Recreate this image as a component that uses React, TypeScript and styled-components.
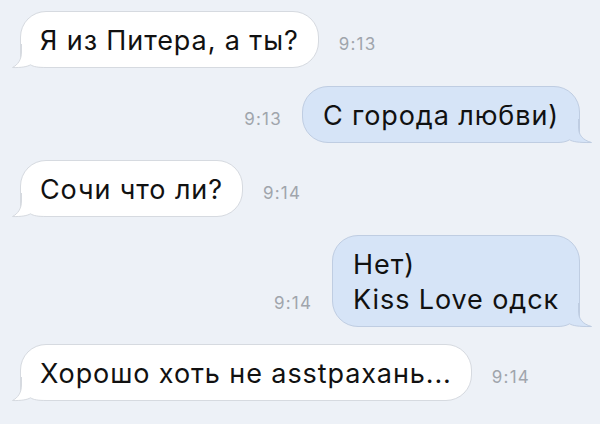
import React from "react";
import styled, { createGlobalStyle } from "styled-components";

const BG = "#edf1f7";

const Global = createGlobalStyle`
  html, body { margin: 0; padding: 0; background: ${BG}; }
  body { font-family: Inter, "Liberation Sans", Arial, sans-serif; }
`;

const Chat = styled.div`
  width: 600px;
  height: 424px;
  box-sizing: border-box;
  padding: 11px 20px 0 20px;
  display: flex;
  flex-direction: column;
  gap: 17.5px;
  background: ${BG};
  overflow: hidden;
`;

const Row = styled.div<{ $out?: boolean }>`
  display: flex;
  flex-direction: ${(p) => (p.$out ? "row-reverse" : "row")};
  justify-content: flex-start;
  align-items: last baseline;
  gap: 20px;
`;

const Bubble = styled.div<{ $out?: boolean }>`
  position: relative;
  box-sizing: border-box;
  padding: 11px ${(p) => (p.$out ? "20px" : "19px")} 9px;
  font-size: 27px;
  line-height: 35px;
  letter-spacing: 0.9px;
  color: #111;
  background: ${(p) => (p.$out ? "#d6e4f7" : "#ffffff")};
  border: 1px solid ${(p) => (p.$out ? "#bfcde2" : "#d6dae0")};
  border-radius: 26px;
  ${(p) => (p.$out ? "border-bottom-right-radius: 4px;" : "border-bottom-left-radius: 4px;")}
`;

const Text = styled.span`
  position: relative;
  z-index: 1;
  white-space: pre-line;
`;

const Tail = styled.svg<{ $out?: boolean }>`
  position: absolute;
  bottom: -1px;
  width: 34px;
  height: 24px;
  overflow: visible;
  ${(p) => (p.$out ? "right: -13px; transform: scaleX(-1);" : "left: -9px;")}
`;

const Time = styled.span`
  font-size: 17px;
  color: #a0a5ac;
  letter-spacing: 1.2px;
`;

function BubbleTail({ out }: { out?: boolean }) {
  const fill = out ? "#d6e4f7" : "#ffffff";
  const stroke = out ? "#bfcde2" : "#d6dae0";
  const x = out ? 13.5 : 9.5;
  return (
    <Tail $out={out} viewBox="0 0 34 24">
      <path
        d={`M${x} 0 L${x} 8 C${x} 16 ${x - 4} 21 0.5 23.5 C${x} 23.8 ${x + 6} 22.6 ${x + 9} 20.8 C${x + 12} 22.8 ${x + 17} 23.5 34 23.5 L34 0 Z`}
        fill={fill}
      />
      <path
        d={`M0.5 23.5 C${x} 23.8 ${x + 6} 22.6 ${x + 9} 20.8 C${x + 12} 22.8 ${x + 17} 23.5 34 23.5 L34 24.5 L0 24.5 Z`}
        fill={BG}
      />
      <path
        d={`M${x} 0 L${x} 8 C${x} 16 ${x - 4} 21 0.5 23.5 C${x} 23.8 ${x + 6} 22.6 ${x + 9} 20.8 C${x + 12} 22.8 ${x + 17} 23.5 34 23.5`}
        fill="none"
        stroke={stroke}
        strokeWidth={1}
      />
    </Tail>
  );
}

type Msg = { text: string; time: string; out?: boolean };

const messages: Msg[] = [
  { text: "Я из Питера, а ты?", time: "9:13" },
  { text: "С города любви)", time: "9:13", out: true },
  { text: "Сочи что ли?", time: "9:14" },
  { text: "Нет)\nKiss Love одск", time: "9:14", out: true },
  { text: "Хорошо хоть не asstрахань...", time: "9:14" },
];

export default function App() {
  return (
    <>
      <Global />
      <Chat>
        {messages.map((m, i) => (
          <Row key={i} $out={m.out}>
            <Bubble $out={m.out}>
              <BubbleTail out={m.out} />
              <Text>{m.text}</Text>
            </Bubble>
            <Time>{m.time}</Time>
          </Row>
        ))}
      </Chat>
    </>
  );
}
